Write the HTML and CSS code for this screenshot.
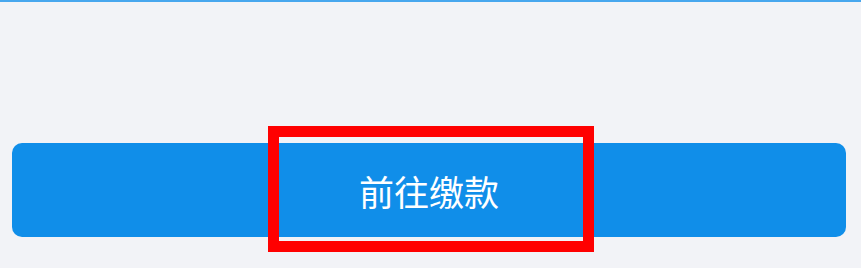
FILE: index.html
```html
<!DOCTYPE html>
<html lang="zh">
<head>
<meta charset="utf-8">
<link rel="stylesheet" href="styles.css">
</head>
<body>
<div class="topline"></div>
<div class="page">
  <div class="btn-wrap">
    <button class="pay-btn">前往缴款</button>
    <div class="highlight"></div>
  </div>
</div>
</body>
</html>
```
FILE: styles.css
```css
html, body {
  margin: 0;
  padding: 0;
  background: #f2f3f7;
  width: 861px;
  height: 268px;
  overflow: hidden;
  font-family: "Noto Sans CJK SC", "Noto Sans", sans-serif;
}
.topline {
  height: 2px;
  background: #48a7ee;
}
.page {
  padding: 141px 15px 0 12px;
}
.btn-wrap {
  position: relative;
}
.pay-btn {
  display: flex;
  align-items: center;
  justify-content: center;
  width: 100%;
  height: 94px;
  border: none;
  border-radius: 10px;
  background: #108ee9;
  color: #ffffff;
  font-family: "Noto Sans CJK SC", "Noto Sans", sans-serif;
  font-size: 35px;
  font-weight: 400;
  padding: 0;
}
.highlight {
  position: absolute;
  left: 256px;
  top: -17px;
  width: 304px;
  height: 104px;
  border: 11px solid #ff0000;
}
```
